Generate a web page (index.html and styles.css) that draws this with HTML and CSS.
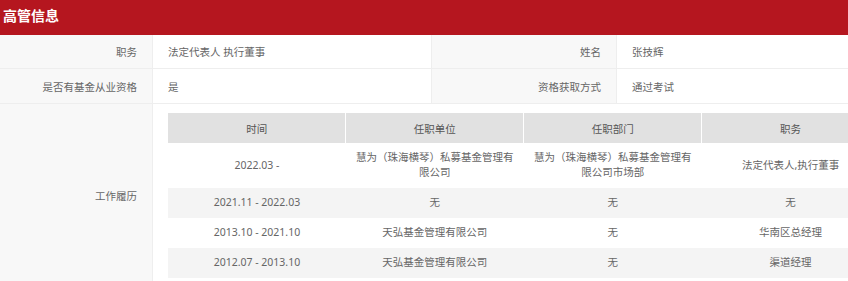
FILE: index.html
```html
<!DOCTYPE html>
<html lang="zh-CN">
<head>
<meta charset="utf-8">
<title>高管信息</title>
<link rel="stylesheet" href="styles.css">
</head>
<body>
<section class="panel">
  <h2 class="panel-title">高管信息</h2>
  <div class="info-grid">
    <div class="cell label">职务</div>
    <div class="cell value">法定代表人 执行董事</div>
    <div class="cell label">姓名</div>
    <div class="cell value">张技辉</div>

    <div class="cell label row2">是否有基金从业资格</div>
    <div class="cell value row2">是</div>
    <div class="cell label row2">资格获取方式</div>
    <div class="cell value row2">通过考试</div>

    <div class="cell label history-label">工作履历</div>
    <div class="cell value history-value">
      <table class="history">
        <thead>
          <tr><th>时间</th><th>任职单位</th><th>任职部门</th><th>职务</th></tr>
        </thead>
        <tbody>
          <tr><td>2022.03 -</td><td>慧为（珠海横琴）私募基金管理有限公司</td><td>慧为（珠海横琴）私募基金管理有限公司市场部</td><td>法定代表人,执行董事</td></tr>
          <tr class="alt"><td>2021.11 - 2022.03</td><td>无</td><td>无</td><td>无</td></tr>
          <tr><td>2013.10 - 2021.10</td><td>天弘基金管理有限公司</td><td>无</td><td>华南区总经理</td></tr>
          <tr class="alt"><td>2012.07 - 2013.10</td><td>天弘基金管理有限公司</td><td>无</td><td>渠道经理</td></tr>
        </tbody>
      </table>
    </div>
  </div>
</section>
</body>
</html>
```

FILE: styles.css
```css
html, body {
  margin: 0;
  padding: 0;
  background: #fff;
}
body {
  font-family: "Noto Sans", "Noto Sans CJK SC", sans-serif;
  font-size: 10.5px;
  color: #666;
}
.panel {
  width: 848px;
  overflow: hidden;
}
.panel-title {
  margin: 0;
  height: 35px;
  line-height: 31px;
  padding-left: 3px;
  background: #b5161f;
  color: #fff;
  font-family: "Noto Sans CJK SC", sans-serif;
  font-size: 14px;
  font-weight: bold;
}
.info-grid {
  display: grid;
  grid-template-columns: 152px 278px 184px 1fr;
  grid-template-rows: 33px 34px auto;
  gap: 1px;
  background: #eeeeee;
}
.cell {
  display: flex;
  align-items: center;
  background: #fff;
  min-width: 0;
}
.label {
  justify-content: flex-end;
  padding-right: 15px;
  background: #f8f8f8;
  color: #666;
}
.value {
  padding-left: 15px;
  color: #666;
}
.history-value {
  grid-column: 2 / span 3;
  padding: 9px 0 9px 15px;
  align-items: flex-start;
  overflow: hidden;
}
.history {
  width: 712px;
  flex: 0 0 712px;
  table-layout: fixed;
  border-collapse: collapse;
  font-size: 10.5px;
}
.history th {
  height: 30px;
  padding: 0 8px;
  background: #e1e1e1;
  color: #555;
  font-weight: normal;
  border-right: 1px solid #fff;
  text-align: center;
}
.history td {
  padding: 7px 8px 8px;
  line-height: 15px;
  text-align: center;
  color: #666;
  background: #fff;
}
.history tr.alt td {
  background: #f4f4f4;
}
```
